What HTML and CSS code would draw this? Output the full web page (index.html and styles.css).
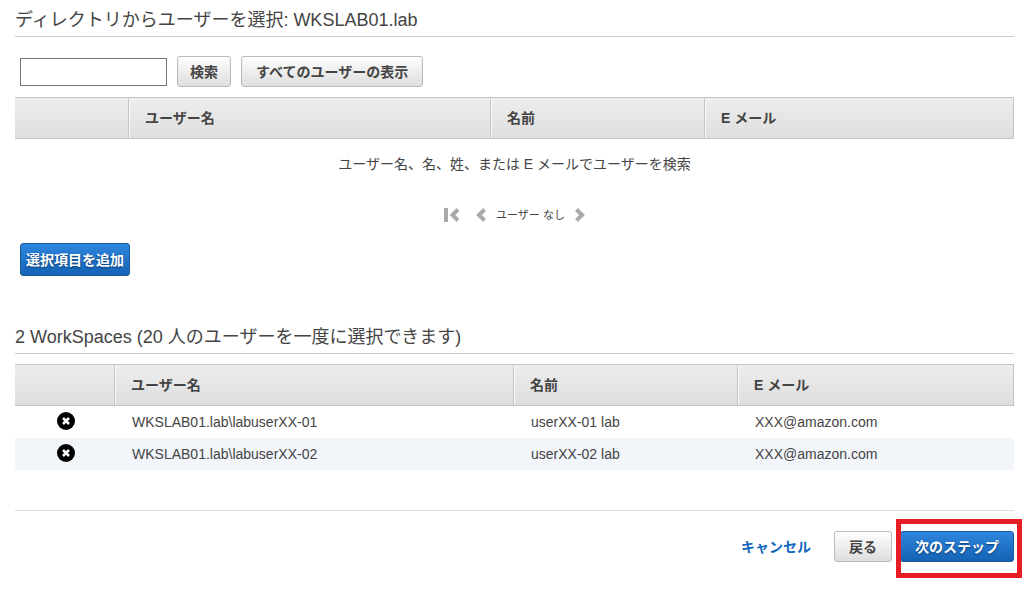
FILE: index.html
```
<!DOCTYPE html>
<html lang="ja">
<head>
<meta charset="utf-8">
<meta name="viewport" content="width=device-width, initial-scale=1">
<title>ユーザーの選択</title>
<link rel="stylesheet" href="styles.css">
</head>
<body>
<main class="page">
  <section>
    <h1 class="section-title">ディレクトリからユーザーを選択: WKSLAB01.lab</h1>
    <form class="toolbar">
      <input class="search-input" type="text" aria-label="ユーザーを検索">
      <button class="btn compact" type="button">検索</button>
      <button class="btn" type="button">すべてのユーザーの表示</button>
    </form>
    <table class="grid">
      <colgroup><col class="search-pick"><col class="search-user"><col class="search-name"><col></colgroup>
      <thead>
        <tr><th></th><th scope="col">ユーザー名</th><th scope="col">名前</th><th scope="col">E メール</th></tr>
      </thead>
      <tbody>
        <tr><td class="empty" colspan="4">ユーザー名、名、姓、または E メールでユーザーを検索</td></tr>
      </tbody>
    </table>
    <nav class="pager" aria-label="ページ">
      <button class="pager-btn first" type="button" aria-label="最初">
        <svg width="16" height="14" viewBox="0 0 16 14"><path fill="#aaa" d="M0 0h4v14H0z"/><path fill="none" stroke="#aaa" stroke-width="4" d="M14 1.500 8.500 7 14 12.500"/></svg>
      </button>
      <button class="pager-btn" type="button" aria-label="前へ">
        <svg width="10" height="14" viewBox="0 0 10 14"><path fill="none" stroke="#aaa" stroke-width="4" d="M8.500 1.500 3 7l5.500 5.500"/></svg>
      </button>
      <span class="pager-text">ユーザー なし</span>
      <button class="pager-btn" type="button" aria-label="次へ">
        <svg width="10" height="14" viewBox="0 0 10 14"><path fill="none" stroke="#aaa" stroke-width="4" d="M1.500 1.500 7 7l-5.500 5.500"/></svg>
      </button>
    </nav>
    <div class="add-row"><button class="btn primary add" type="button">選択項目を追加</button></div>
  </section>

  <section class="selected">
    <h2 class="section-title">2 WorkSpaces (20 人のユーザーを一度に選択できます)</h2>
    <table class="grid selected-grid">
      <colgroup><col class="picked-remove"><col class="picked-user"><col class="picked-name"><col></colgroup>
      <thead>
        <tr><th></th><th scope="col">ユーザー名</th><th scope="col">名前</th><th scope="col">E メール</th></tr>
      </thead>
      <tbody>
        <tr>
          <td class="remove-cell"><button class="remove" type="button" aria-label="削除"><svg width="20" height="20" viewBox="0 0 20 20"><circle cx="10" cy="10" r="9" fill="#000"/><path stroke="#fff" stroke-width="2.500" d="m7 7 6 6m0-6-6 6"/></svg></button></td>
          <td>WKSLAB01.lab\labuserXX-01</td><td>userXX-01 lab</td><td>XXX@amazon.com</td>
        </tr>
        <tr>
          <td class="remove-cell"><button class="remove" type="button" aria-label="削除"><svg width="20" height="20" viewBox="0 0 20 20"><circle cx="10" cy="10" r="9" fill="#000"/><path stroke="#fff" stroke-width="2.500" d="m7 7 6 6m0-6-6 6"/></svg></button></td>
          <td>WKSLAB01.lab\labuserXX-02</td><td>userXX-02 lab</td><td>XXX@amazon.com</td>
        </tr>
      </tbody>
    </table>
  </section>

  <footer class="actions">
    <a class="cancel" href="#">キャンセル</a>
    <button class="btn" type="button">戻る</button>
    <span class="highlight"><button class="btn primary" type="button">次のステップ</button></span>
  </footer>
</main>
</body>
</html>
```
FILE: styles.css
```
* {
  box-sizing: border-box;
}

body {
  margin: 0;
  background: #fff;
  color: #444;
  font: 14px/20px "Liberation Sans", "Noto Sans CJK JP", sans-serif;
}

button,
input {
  font: inherit;
}

.page {
  padding: 8px 8px 11px 15px;
}

.section-title {
  margin: 0;
  padding-bottom: 4px;
  border-bottom: 1px solid #ccc;
  font-size: 18px;
  line-height: 24px;
  font-weight: 400;
}

.toolbar {
  display: flex;
  align-items: center;
  gap: 10px;
  padding: 19px 5px 10px;
}

.search-input {
  width: 147px;
  height: 28px;
  border: 1px solid #777;
  background: #fff;
}

.btn {
  height: 31px;
  padding: 0 14px;
  border: 1px solid #bbb;
  border-radius: 3px;
  background: linear-gradient(#fff, #ddd);
  color: #444;
  font-weight: 700;
  line-height: 20px;
  white-space: nowrap;
}

.compact {
  padding: 0 12px;
}

.primary {
  border-color: #1a5a9c;
  background: linear-gradient(#2f86dd, #1463b5);
  color: #fff;
  text-shadow: 0 1px 2px #0a3a70;
}

.add {
  height: 33px;
  padding: 0 5px;
}

.grid {
  width: 100%;
  table-layout: fixed;
  border-collapse: separate;
  border-spacing: 0;
}

.search-pick {
  width: 114px;
}

.search-user {
  width: 362px;
}

.search-name {
  width: 214px;
}

.picked-remove {
  width: 100px;
}

.picked-user {
  width: 399px;
}

.picked-name {
  width: 224px;
}

.grid th {
  height: 42px;
  padding: 0 16px;
  border: solid #c4c4c4;
  border-width: 1px 1px 1px 0;
  background: linear-gradient(#ededed, #dedede);
  box-shadow: inset 1px 0 #f8f8f8;
  text-align: left;
}

.grid th:first-child {
  box-shadow: none;
}

.grid td {
  height: 32px;
  padding: 0 17px;
}

.grid .empty {
  height: 50px;
  text-align: center;
}

.pager {
  display: flex;
  justify-content: center;
  align-items: center;
  gap: 10px;
  height: 52px;
}

.pager-btn,
.remove {
  display: flex;
  padding: 0;
  border: 0;
  background: none;
}

.first {
  margin-right: 6px;
}

.pager-text {
  font-size: 11px;
}

.add-row {
  display: flex;
  padding: 2px 5px 0;
}

.selected {
  padding-top: 49px;
}

.selected-grid {
  margin-top: 10px;
}

.selected-grid tbody tr:nth-child(even) {
  background: #f2f5fa;
}

.grid .remove-cell {
  padding: 0 0 2px 41px;
}

.actions {
  display: flex;
  justify-content: flex-end;
  align-items: center;
  margin-top: 40px;
  padding: 20px 0 16px;
  border-top: 1px solid #ddd;
}

.cancel {
  margin-right: 23px;
  color: #1166bb;
  font-weight: 700;
  text-decoration: none;
}

.highlight {
  display: flex;
  position: relative;
  margin-left: 8px;
}

/* Callout frame drawn over the primary action */
.highlight::after {
  content: "";
  position: absolute;
  inset: -12px -8px -16px -4px;
  border: 5px solid #e81c24;
  pointer-events: none;
}
```
